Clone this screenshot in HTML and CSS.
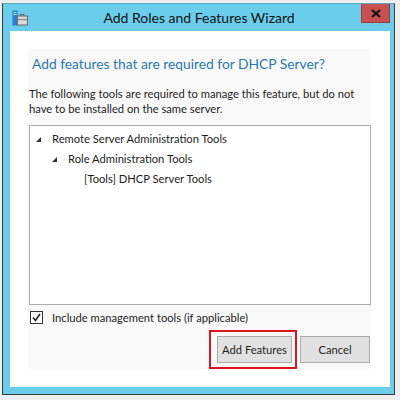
FILE: index.html
```html
<!DOCTYPE html>
<html>
<head>
<meta charset="utf-8">
<link rel="stylesheet" href="styles.css">
</head>
<body>
<div class="window">
  <div class="titlebar">
    <svg class="app-icon" width="16" height="16" viewBox="0 0 16 16">
      <rect x="0.5" y="0.5" width="5" height="15" fill="#2a7fd0"/>
      <rect x="1.5" y="2" width="3" height="1" fill="#cfe6fa"/>
      <rect x="1.5" y="4" width="3" height="1" fill="#cfe6fa"/>
      <path d="M8 6 V4.5 H12 V6" fill="none" stroke="#6b6b6b" stroke-width="1"/>
      <rect x="5.5" y="6" width="10" height="9" fill="#d9d9d9" stroke="#6b6b6b" stroke-width="1"/>
      <rect x="6" y="9" width="9" height="1.2" fill="#8a8a8a"/>
    </svg>
    <div class="title">Add Roles and Features Wizard</div>
    <div class="close">
      <svg width="10" height="9" viewBox="0 0 10 9"><path d="M1 1 L9 8 M9 1 L1 8" stroke="#111" stroke-width="2.2"/></svg>
    </div>
  </div>
  <div class="client">
    <div class="panel">
      <div class="heading">Add features that are required for DHCP Server?</div>
      <p class="desc">The following tools are required to manage this feature, but do not have to be installed on the same server.</p>
      <div class="tree">
        <div class="row lvl0"><span class="arrow"></span><span>Remote Server Administration Tools</span></div>
        <div class="row lvl1"><span class="arrow"></span><span>Role Administration Tools</span></div>
        <div class="row lvl2"><span>[Tools] DHCP Server Tools</span></div>
      </div>
      <label class="check">
        <span class="box">
          <svg width="11" height="11" viewBox="0 0 11 11"><path d="M2 5.5 L4.5 8.5 L9 2" fill="none" stroke="#222" stroke-width="1.6"/></svg>
        </span>
        <span>Include management tools (if applicable)</span>
      </label>
      <div class="buttons">
        <div class="highlight"><div class="btn">Add Features</div></div>
        <div class="btn cancel">Cancel</div>
      </div>
    </div>
  </div>
</div>
</body>
</html>
```

FILE: styles.css
```css
html, body {
  margin: 0;
  padding: 0;
  background: #efefef;
  width: 400px;
  height: 400px;
  overflow: hidden;
  font-family: "Lato", "Noto Sans", sans-serif;
}

.window {
  margin: 3px 0 0 2px;
  width: 393px;
  height: 392px;
  box-sizing: border-box;
  border: 1px solid #3a3a3a;
  border-top-color: #5aa9c2;
  background: #6bcdec;
  display: flex;
  flex-direction: column;
}

.titlebar {
  height: 27px;
  flex: none;
  display: flex;
  align-items: flex-start;
}

.app-icon {
  margin: 6px 0 0 9px;
  flex: none;
}

.title {
  flex: 1;
  text-align: center;
  font-size: 14px;
  color: #111;
  line-height: 20px;
  margin-top: 4px;
  padding-left: 9px;
}

.close {
  width: 29px;
  height: 19px;
  margin-right: 4px;
  background: #c75050;
  border: 1px solid #9a3c3c;
  border-top: none;
  box-sizing: border-box;
  display: flex;
  align-items: center;
  justify-content: center;
}

.client {
  flex: 1;
  margin: 0 4px 7px 7px;
  background: #ffffff;
  padding: 18px 19px 18px 18px;
  box-sizing: border-box;
  display: flex;
}

.panel {
  flex: 1;
  background: #f9f9f9;
  display: flex;
  flex-direction: column;
  font-size: 11.2px;
  color: #1e1e1e;
}

.heading {
  font-size: 13.8px;
  color: #2a78b0;
  margin: 0 0 0 4px;
  line-height: 20px;
  padding-top: 5px;
  white-space: nowrap;
}

.desc {
  margin: 12px 0 0 1px;
  line-height: 15px;
  padding-right: 14px;
}

.tree {
  margin: 9px 0 0 1px;
  height: 180px;
  box-sizing: border-box;
  border: 1px solid #acacac;
  background: #fff;
  padding-top: 2px;
}

.row {
  height: 20px;
  display: flex;
  align-items: center;
  white-space: nowrap;
}

.lvl0 { padding-left: 6px; }
.lvl1 { padding-left: 22px; }
.lvl2 { padding-left: 54px; }

.arrow {
  width: 0;
  height: 0;
  border-left: 5px solid transparent;
  border-bottom: 5px solid #333;
  margin: 2px 11px 0 0;
}

.check {
  display: flex;
  align-items: center;
  margin: 6px 0 0 2px;
  height: 13px;
  white-space: nowrap;
}

.box {
  width: 13px;
  height: 13px;
  box-sizing: border-box;
  border: 1px solid #333;
  background: #fff;
  display: flex;
  align-items: center;
  justify-content: center;
  margin-right: 9px;
}

.buttons {
  display: flex;
  justify-content: flex-end;
  align-items: flex-start;
  margin-top: 6px;
  gap: 3px;
}

.highlight {
  border: 2px solid #e0141e;
  padding: 4px 3px 4px 6px;
}

.btn {
  width: 75px;
  height: 27px;
  box-sizing: border-box;
  border: 1px solid #adadad;
  background: #e1e1e1;
  display: flex;
  align-items: center;
  justify-content: center;
  font-size: 11.2px;
  color: #1e1e1e;
  white-space: nowrap;
}

.cancel {
  width: 70px;
  margin-top: 6px;
  margin-right: 1px;
}
```
